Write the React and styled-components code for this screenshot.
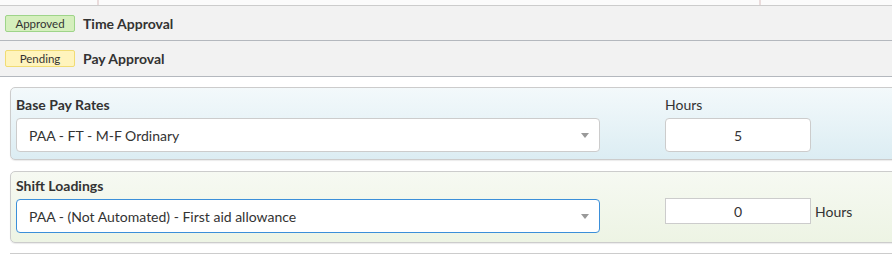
import React from "react";
import styled, { createGlobalStyle } from "styled-components";

const GlobalStyle = createGlobalStyle`
  html, body {
    margin: 0;
    padding: 0;
    background: #ffffff;
    font-family: Lato, "Open Sans", sans-serif;
    color: #333333;
  }
`;

const Page = styled.div`
  width: 892px;
  height: 260px;
  overflow: hidden;
`;

const TopStrip = styled.div`
  height: 5px;
  background: #fbfbfb;
  border-bottom: 1px solid #cccccc;
  display: grid;
  grid-template-columns: 99px 662px 1fr;
`;

const StripCell = styled.div`
  border-right: ${(props) => (props.last ? "none" : "2px solid #eadcdc")};
`;

const StatusRow = styled.div`
  height: ${(props) => props.height || "34px"};
  background: #f2f2f2;
  border-bottom: 1px solid #b4b8be;
  display: flex;
  align-items: center;
  padding: 0 0 0 5px;
`;

const Badge = styled.span`
  box-sizing: border-box;
  width: 70px;
  height: 17px;
  display: flex;
  align-items: center;
  justify-content: center;
  font-size: 11.5px;
  color: #333333;
  background: ${(props) => props.bg};
  border: 1px solid ${(props) => props.border};
  border-radius: 2px;
  margin-right: 8px;
`;

const RowTitle = styled.span`
  font-size: 14px;
  font-weight: 700;
  color: #333333;
`;

const Panels = styled.div`
  padding: 10px 0 0 10px;
  display: flex;
  flex-direction: column;
  gap: 11px;
`;

const Panel = styled.div`
  box-sizing: border-box;
  width: 892px;
  height: ${(props) => props.height};
  border: 1px solid #cccccc;
  border-radius: 5px;
  background: linear-gradient(${(props) => props.from}, ${(props) => props.to});
  box-shadow: 0 1px 1px rgba(0, 0, 0, 0.08);
  padding: ${(props) => props.pad || "6px 0 0 5px"};
  display: flex;
  gap: 65px;
  align-items: flex-start;
`;

const Column = styled.div`
  display: flex;
  flex-direction: column;
  gap: ${(props) => props.gap || "5px"};
`;

const Label = styled.div`
  font-size: 14px;
  font-weight: ${(props) => (props.light ? 400 : 700)};
  line-height: 17px;
  color: #333333;
  height: 17px;
`;

const Select = styled.div`
  box-sizing: border-box;
  width: 584px;
  height: 34px;
  background: #ffffff;
  border: 1px solid ${(props) => (props.focused ? "#3b8fd9" : "#cccccc")};
  border-radius: 4px;
  display: flex;
  align-items: center;
  justify-content: space-between;
  padding: 0 10px 0 12px;
  font-size: 14px;
  color: #333333;
`;

const Caret = styled.span`
  width: 0;
  height: 0;
  border-left: 4px solid transparent;
  border-right: 4px solid transparent;
  border-top: 5px solid #999999;
`;

const HoursBox = styled.div`
  box-sizing: border-box;
  width: 146px;
  height: ${(props) => props.height || "34px"};
  background: #ffffff;
  border: 1px solid #cccccc;
  border-radius: ${(props) => props.radius || "4px"};
  display: flex;
  align-items: center;
  justify-content: center;
  font-size: 14px;
  color: #333333;
`;

const InlineHours = styled.div`
  display: flex;
  align-items: center;
  gap: 4px;
  margin-top: 21px;
`;

const BottomRule = styled.div`
  margin: 10px 0 0 10px;
  border-top: 1px solid #cccccc;
`;

const App = () => {
  return (
    <Page>
      <GlobalStyle />
      <TopStrip>
        <StripCell />
        <StripCell />
        <StripCell last />
      </TopStrip>
      <StatusRow>
        <Badge bg="#d5efbd" border="#9ed489">Approved</Badge>
        <RowTitle>Time Approval</RowTitle>
      </StatusRow>
      <StatusRow height="35px">
        <Badge bg="#fff4bd" border="#f1dc74">Pending</Badge>
        <RowTitle>Pay Approval</RowTitle>
      </StatusRow>
      <Panels>
        <Panel height="73px" from="#f3f9fb" to="#dcedf3" pad="8px 0 0 5px">
          <Column>
            <Label>Base Pay Rates</Label>
            <Select>
              PAA - FT - M-F Ordinary
              <Caret />
            </Select>
          </Column>
          <Column>
            <Label light>Hours</Label>
            <HoursBox>5</HoursBox>
          </Column>
        </Panel>
        <Panel height="72px" from="#f6f9f2" to="#edf4e4" pad="5px 0 0 5px">
          <Column gap="5px">
            <Label>Shift Loadings</Label>
            <Select focused>
              PAA - (Not Automated) - First aid allowance
              <Caret />
            </Select>
          </Column>
          <InlineHours>
            <HoursBox height="26px" radius="0">0</HoursBox>
            <Label light>Hours</Label>
          </InlineHours>
        </Panel>
      </Panels>
      <BottomRule />
    </Page>
  );
};

export default App;
